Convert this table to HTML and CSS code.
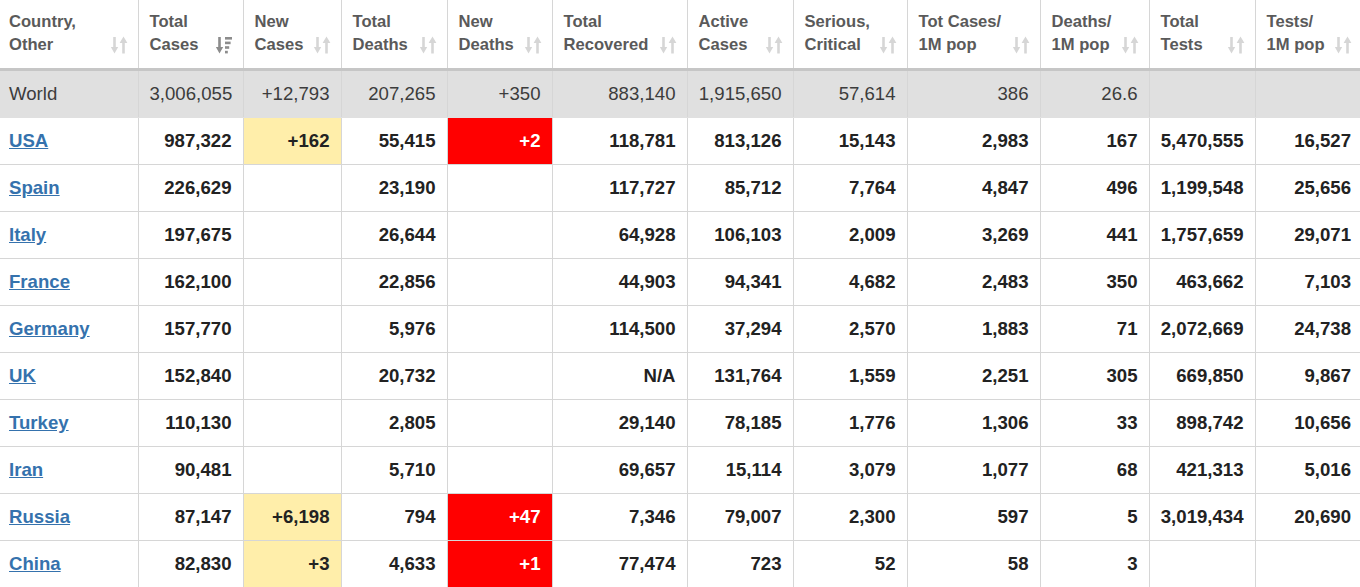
FILE: index.html
```html
<!DOCTYPE html>
<html lang="en">
<head>
<meta charset="utf-8">
<title>Coronavirus cases by country</title>
<link rel="stylesheet" href="styles.css">
</head>
<body>
<svg class="defs" width="0" height="0" aria-hidden="true">
  <defs>
    <symbol id="sort-both" viewBox="0 0 17 18">
      <path d="M2.2 1h2.6v10H7.2L3.5 17.5 -0.2 11H2.2z"/>
      <path d="M11.2 17.5h2.6V7h2.6L12.5 0.5 8.6 7h2.6z"/>
    </symbol>
    <symbol id="sort-desc" viewBox="0 0 17 18">
      <path d="M2.2 1h2.6v10H7.2L3.5 17.5 -0.2 11H2.2z"/>
      <rect x="9" y="1" width="7" height="2.6"/>
      <rect x="9" y="5.6" width="5.6" height="2.6"/>
      <rect x="9" y="10.2" width="4.2" height="2.6"/>
      <rect x="9" y="14.8" width="2.8" height="2.6"/>
    </symbol>
  </defs>
</svg>
<table class="grid">
  <colgroup>
    <col class="w138"><col class="w105"><col class="w98"><col class="w106"><col class="w105"><col class="w135"><col class="w106"><col class="w114"><col class="w133"><col class="w109"><col class="w106"><col class="w107">
  </colgroup>
  <thead>
    <tr>
      <th><div class="th-in"><span>Country,<br>Other</span><svg class="sort"><use href="#sort-both"/></svg></div></th>
      <th><div class="th-in"><span>Total<br>Cases</span><svg class="sort active"><use href="#sort-desc"/></svg></div></th>
      <th><div class="th-in"><span>New<br>Cases</span><svg class="sort"><use href="#sort-both"/></svg></div></th>
      <th><div class="th-in"><span>Total<br>Deaths</span><svg class="sort"><use href="#sort-both"/></svg></div></th>
      <th><div class="th-in"><span>New<br>Deaths</span><svg class="sort"><use href="#sort-both"/></svg></div></th>
      <th><div class="th-in"><span>Total<br>Recovered</span><svg class="sort"><use href="#sort-both"/></svg></div></th>
      <th><div class="th-in"><span>Active<br>Cases</span><svg class="sort"><use href="#sort-both"/></svg></div></th>
      <th><div class="th-in"><span>Serious,<br>Critical</span><svg class="sort"><use href="#sort-both"/></svg></div></th>
      <th><div class="th-in"><span>Tot&nbsp;Cases/<br>1M pop</span><svg class="sort"><use href="#sort-both"/></svg></div></th>
      <th><div class="th-in"><span>Deaths/<br>1M pop</span><svg class="sort"><use href="#sort-both"/></svg></div></th>
      <th><div class="th-in"><span>Total<br>Tests</span><svg class="sort"><use href="#sort-both"/></svg></div></th>
      <th><div class="th-in"><span>Tests/<br>1M pop</span><svg class="sort"><use href="#sort-both"/></svg></div></th>
    </tr>
  </thead>
  <tbody>
    <tr class="world">
      <td class="name">World</td><td>3,006,055</td><td>+12,793</td><td>207,265</td><td>+350</td><td>883,140</td><td>1,915,650</td><td>57,614</td><td>386</td><td>26.6</td><td></td><td></td>
    </tr>
    <tr>
      <td class="name"><a href="#">USA</a></td><td>987,322</td><td class="new-case">+162</td><td>55,415</td><td class="new-death">+2</td><td>118,781</td><td>813,126</td><td>15,143</td><td>2,983</td><td>167</td><td>5,470,555</td><td>16,527</td>
    </tr>
    <tr>
      <td class="name"><a href="#">Spain</a></td><td>226,629</td><td></td><td>23,190</td><td></td><td>117,727</td><td>85,712</td><td>7,764</td><td>4,847</td><td>496</td><td>1,199,548</td><td>25,656</td>
    </tr>
    <tr>
      <td class="name"><a href="#">Italy</a></td><td>197,675</td><td></td><td>26,644</td><td></td><td>64,928</td><td>106,103</td><td>2,009</td><td>3,269</td><td>441</td><td>1,757,659</td><td>29,071</td>
    </tr>
    <tr>
      <td class="name"><a href="#">France</a></td><td>162,100</td><td></td><td>22,856</td><td></td><td>44,903</td><td>94,341</td><td>4,682</td><td>2,483</td><td>350</td><td>463,662</td><td>7,103</td>
    </tr>
    <tr>
      <td class="name"><a href="#">Germany</a></td><td>157,770</td><td></td><td>5,976</td><td></td><td>114,500</td><td>37,294</td><td>2,570</td><td>1,883</td><td>71</td><td>2,072,669</td><td>24,738</td>
    </tr>
    <tr>
      <td class="name"><a href="#">UK</a></td><td>152,840</td><td></td><td>20,732</td><td></td><td>N/A</td><td>131,764</td><td>1,559</td><td>2,251</td><td>305</td><td>669,850</td><td>9,867</td>
    </tr>
    <tr>
      <td class="name"><a href="#">Turkey</a></td><td>110,130</td><td></td><td>2,805</td><td></td><td>29,140</td><td>78,185</td><td>1,776</td><td>1,306</td><td>33</td><td>898,742</td><td>10,656</td>
    </tr>
    <tr>
      <td class="name"><a href="#">Iran</a></td><td>90,481</td><td></td><td>5,710</td><td></td><td>69,657</td><td>15,114</td><td>3,079</td><td>1,077</td><td>68</td><td>421,313</td><td>5,016</td>
    </tr>
    <tr>
      <td class="name"><a href="#">Russia</a></td><td>87,147</td><td class="new-case">+6,198</td><td>794</td><td class="new-death">+47</td><td>7,346</td><td>79,007</td><td>2,300</td><td>597</td><td>5</td><td>3,019,434</td><td>20,690</td>
    </tr>
    <tr>
      <td class="name"><a href="#">China</a></td><td>82,830</td><td class="new-case">+3</td><td>4,633</td><td class="new-death">+1</td><td>77,474</td><td>723</td><td>52</td><td>58</td><td>3</td><td></td><td></td>
    </tr>
  </tbody>
</table>
</body>
</html>
```

FILE: styles.css
```css
html, body {
  margin: 0;
  padding: 0;
  background: #ffffff;
  overflow: hidden;
}

body {
  font-family: "Liberation Sans", Arial, sans-serif;
  color: #222222;
}

.defs {
  position: absolute;
  width: 0;
  height: 0;
  overflow: hidden;
}

.grid {
  border-collapse: collapse;
  table-layout: fixed;
  width: 1362px;
}

.w138 { width: 138px; }
.w105 { width: 105px; }
.w98  { width: 98px; }
.w106 { width: 106px; }
.w107 { width: 107px; }
.w109 { width: 109px; }
.w114 { width: 114px; }
.w133 { width: 133px; }
.w135 { width: 135px; }

.grid th {
  font-size: 16.6px;
  line-height: 23.4px;
  font-weight: bold;
  color: #5a5a5a;
  text-align: left;
  vertical-align: bottom;
  padding: 10px 10px 11px 11px;
  border-left: 1px solid #d6d6d6;
  border-bottom: 3px solid #c6c6c6;
  white-space: nowrap;
}

.grid th:first-child {
  padding-left: 9px;
  border-left: none;
}

.th-in {
  display: flex;
  align-items: flex-end;
  justify-content: space-between;
  gap: 4px;
}

.sort {
  flex-shrink: 0;
  width: 17px;
  height: 18px;
  margin-bottom: 3px;
  fill: #d6d6d6;
}

.sort.active {
  fill: #8c8c8c;
}

.grid td {
  height: 46px;
  padding: 0 11px;
  font-size: 18.6px;
  font-weight: bold;
  color: #222222;
  text-align: right;
  vertical-align: middle;
  white-space: nowrap;
  border-left: 1px solid #d6d6d6;
  border-bottom: 1px solid #d6d6d6;
}

.grid td:first-child {
  border-left: none;
  text-align: left;
  padding-left: 9px;
}

.grid td a {
  color: #3572ad;
  text-decoration: underline;
}

.world td {
  background: #e0e0e0;
  font-weight: normal;
  color: #3c3c3c;
  border-bottom-color: #e0e0e0;
}

.grid td.new-case {
  background: #ffeeaa;
}

.grid td.new-death {
  background: #ff0000;
  color: #ffffff;
}
```
